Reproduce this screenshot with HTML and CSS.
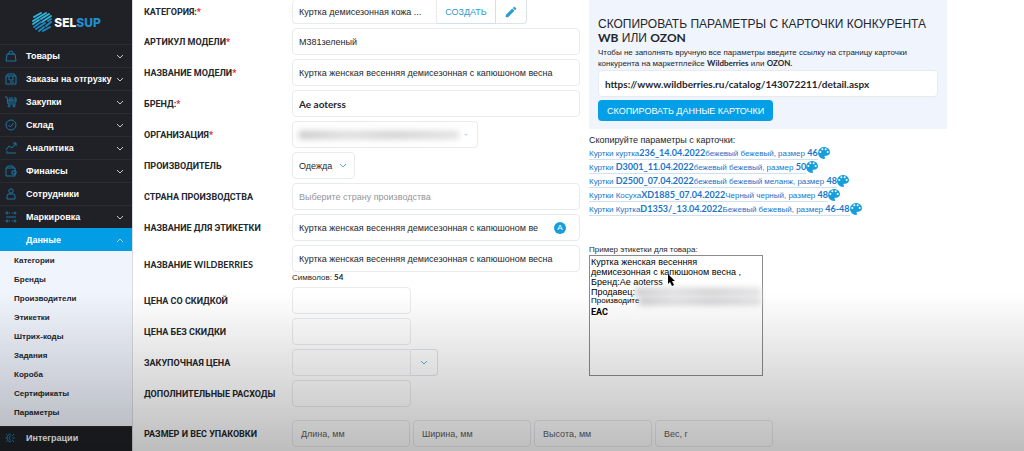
FILE: index.html
```html
<!DOCTYPE html>
<html lang="ru">
<head>
    <meta charset="UTF-8">
    <meta name="viewport" content="width=device-width, initial-scale=1.0">
    <title>SelSup</title>
    <link rel="stylesheet" href="styles.css">
</head>
<body>
    <!-- Shared icons -->
    <svg class="sprite" width="0" height="0">
        <symbol id="chevron" viewBox="0 0 8 5"><path d="M1 1l3 3 3-3" fill="none" stroke="currentColor"/></symbol>
        <symbol id="palette" viewBox="3 3 18 18"><path fill="currentColor" d="M12 3a9 9 0 0 0 0 18c.83 0 1.5-.67 1.5-1.5 0-.39-.15-.74-.39-1.01-.23-.26-.38-.61-.38-.99 0-.83.67-1.5 1.5-1.5H16c2.76 0 5-2.24 5-5 0-4.42-4.03-8-9-8zm-5.5 9a1.5 1.5 0 1 1 0-3 1.500 1.500 0 0 1 0 3zm3-4a1.500 1.500 0 1 1 0-3 1.500 1.500 0 0 1 0 3zm5 0a1.500 1.500 0 1 1 0-3 1.500 1.500 0 0 1 0 3zm3 4a1.500 1.500 0 1 1 0-3 1.500 1.500 0 0 1 0 3z"/></symbol>
    </svg>

    <div class="layout">
        <aside class="sidebar">
            <a class="logo" href="#">
                <svg width="22" height="22" viewBox="0 0 22 22" fill="none" stroke-linecap="round">
                    <g stroke="#2fb4dc" stroke-width="2">
                        <path d="M3 6l7-4M2 10l13-8M2 13l6-4M10 8l8-5M11 11l9-6"/>
                    </g>
                    <g stroke="#1b86bd" stroke-width="2">
                        <path d="M3 16l7-5M5 18l9-6M17 10l3-2M8 20l5-4M15 15l5-4M12 20l7-4"/>
                    </g>
                </svg>
                <span>SEL<b>SUP</b></span>
            </a>
            <nav>
                <a class="nav-item" href="#">
                    <svg class="nav-icon" viewBox="0 0 12 12"><path d="M2 4h8l1 7H1zM4 5V3a2 2 0 0 1 4 0v2"/></svg>
                    <span>Товары</span><svg class="arrow"><use href="#chevron"/></svg>
                </a>
                <a class="nav-item" href="#">
                    <svg class="nav-icon" viewBox="0 0 12 12"><path d="M1 3h10v8H1zM1 3l2-2h6l2 2M4 3v4h4V3M5 9h4"/></svg>
                    <span>Заказы на отгрузку</span><svg class="arrow"><use href="#chevron"/></svg>
                </a>
                <a class="nav-item" href="#">
                    <svg class="nav-icon" viewBox="0 0 12 12"><path d="M0 1h2l1 7h8M3 6h8V2H9M5 1v4M7 1v4M3 4h8"/><circle cx="4" cy="10" r="1"/><circle cx="9" cy="10" r="1"/></svg>
                    <span>Закупки</span><svg class="arrow"><use href="#chevron"/></svg>
                </a>
                <a class="nav-item" href="#">
                    <svg class="nav-icon" viewBox="0 0 12 12"><circle cx="6" cy="6" r="5"/><path d="M3.500 6l2 2 3-4"/></svg>
                    <span>Склад</span><svg class="arrow"><use href="#chevron"/></svg>
                </a>
                <a class="nav-item" href="#">
                    <svg class="nav-icon" viewBox="0 0 12 12"><path d="M1 8l3-4 3 2 4-5M8 1h3v3M1 11h10M2 9v1"/></svg>
                    <span>Аналитика</span><svg class="arrow"><use href="#chevron"/></svg>
                </a>
                <a class="nav-item" href="#">
                    <svg class="nav-icon" viewBox="0 0 12 12"><path d="M1 3h9v8H1zM1 3l2-2h5v2M7 6h4v3H7z"/></svg>
                    <span>Финансы</span><svg class="arrow"><use href="#chevron"/></svg>
                </a>
                <a class="nav-item" href="#">
                    <svg class="nav-icon" viewBox="0 0 12 12"><circle cx="6" cy="3" r="2.200"/><path d="M2 11V8q0-2 2-2h4q2 0 2 2v3z"/></svg>
                    <span>Сотрудники</span>
                </a>
                <a class="nav-item" href="#">
                    <svg class="nav-icon" viewBox="0 0 12 12"><circle cx="2" cy="2" r="1"/><circle cx="10" cy="2" r="1"/><circle cx="2" cy="10" r="1"/><circle cx="10" cy="10" r="1"/><path d="M1 6h10M4 2h1M7 2h1M4 10h1M7 10h1"/></svg>
                    <span>Маркировка</span><svg class="arrow"><use href="#chevron"/></svg>
                </a>
                <a class="nav-item active" href="#">
                    <span class="nav-icon"></span>
                    <span>Данные</span><svg class="arrow up"><use href="#chevron"/></svg>
                </a>
                <div class="submenu">
                    <a href="#">Категории</a>
                    <a href="#">Бренды</a>
                    <a href="#">Производители</a>
                    <a href="#">Этикетки</a>
                    <a href="#">Штрих-коды</a>
                    <a href="#">Задания</a>
                    <a href="#">Короба</a>
                    <a href="#">Сертификаты</a>
                    <a href="#">Параметры</a>
                </div>
                <a class="nav-item" href="#">
                    <svg class="nav-icon" viewBox="0 0 12 12"><path d="M6 2a4 4 0 0 0 0 8M6 4a2 2 0 0 0 0 4M7 6h3M7 4l2-2M7 8l2 2M0 6h2M1 2l1 1M1 10l1-1"/></svg>
                    <span>Интеграции</span>
                </a>
            </nav>
        </aside>

        <main class="content">
            <form class="product-form">
                <div class="row row-first">
                    <label for="category">Категория:<i>*</i></label>
                    <div class="group">
                        <select id="category" class="field category"><option>Куртка демисезонная кожа ...</option></select>
                        <button type="button" class="btn-side create">Создать</button>
                        <button type="button" class="btn-side edit" aria-label="Редактировать">
                            <svg width="14" height="14" viewBox="0 0 24 24" fill="currentColor"><path d="M3 17.250V21h3.750L17.800 9.900l-3.700-3.700zM20.700 7a1 1 0 0 0 0-1.400l-2.300-2.300a1 1 0 0 0-1.400 0l-1.800 1.800 3.700 3.700z"/></svg>
                        </button>
                    </div>
                </div>
                <div class="row">
                    <label for="article">Артикул модели<i>*</i></label>
                    <input id="article" class="field" type="text" value="М381зеленый">
                </div>
                <div class="row">
                    <label for="model">Название модели<i>*</i></label>
                    <input id="model" class="field" type="text" value="Куртка женская весенняя демисезонная с капюшоном весна">
                </div>
                <div class="row">
                    <label for="brand">Бренд:<i>*</i></label>
                    <input id="brand" class="field latin" type="text" value="Ae aoterss">
                </div>
                <div class="row">
                    <label for="org">Организация<i>*</i></label>
                    <button type="button" id="org" class="field org"><span class="smear"></span><svg class="mini-arrow"><use href="#chevron"/></svg></button>
                </div>
                <div class="row">
                    <label for="maker">Производитель</label>
                    <div class="select-wrap">
                        <select id="maker" class="field"><option>Одежда</option></select>
                        <svg class="arrow"><use href="#chevron"/></svg>
                    </div>
                </div>
                <div class="row">
                    <label for="country">Страна производства</label>
                    <input id="country" class="field" type="text" placeholder="Выберите страну производства">
                </div>
                <div class="row">
                    <label for="label-name">Название для этикетки</label>
                    <div class="field with-badge">
                        <input id="label-name" type="text" value="Куртка женская весенняя демисезонная с капюшоном весна">
                        <button type="button" class="auto-btn">A</button>
                    </div>
                </div>
                <div class="row">
                    <label for="wb-name">Название <span class="latin">Wildberries</span></label>
                    <div>
                        <input id="wb-name" class="field" type="text" value="Куртка женская весенняя демисезонная с капюшоном весна">
                        <div class="hint">Символов: <span class="latin">54</span></div>
                    </div>
                </div>
                <div class="row">
                    <label for="price-sale">Цена со скидкой</label>
                    <input id="price-sale" class="field short" type="text">
                </div>
                <div class="row">
                    <label for="price">Цена без скидки</label>
                    <input id="price" class="field short" type="text">
                </div>
                <div class="row">
                    <label for="price-buy">Закупочная цена</label>
                    <div class="group">
                        <input id="price-buy" class="field short" type="text">
                        <button type="button" class="btn-side drop" aria-label="Выбрать"><svg class="arrow"><use href="#chevron"/></svg></button>
                    </div>
                </div>
                <div class="row">
                    <label for="costs">Дополнительные расходы</label>
                    <input id="costs" class="field short" type="text">
                </div>
            </form>

            <section class="side">
                <div class="copy-card">
                    <h2>Скопировать параметры с карточки конкурента <span class="latin">WB</span> или <span class="latin">OZON</span></h2>
                    <label for="url">Чтобы не заполнять вручную все параметры введите ссылку на страницу карточки<br>конкурента на маркетплейсе <span class="latin">Wildberries</span> или <span class="latin">OZON.</span></label>
                    <input id="url" class="field latin" type="text" value="https://www.wildberries.ru/catalog/143072211/detail.aspx">
                    <button type="button" class="copy-btn">Скопировать данные карточки</button>
                </div>

                <div class="similar">
                    <p>Скопируйте параметры с карточки:</p>
                    <ul>
                        <li><a href="#">Куртки куртка<span class="latin">236_14.04.2022</span>бежевый бежевый, размер <span class="latin">46</span></a><svg><use href="#palette"/></svg></li>
                        <li><a href="#">Куртки <span class="latin">D3001_11.04.2022</span>бежевый бежевый, размер <span class="latin">50</span></a><svg><use href="#palette"/></svg></li>
                        <li><a href="#">Куртки <span class="latin">D2500_07.04.2022</span>бежевый бежевый меланж, размер <span class="latin">48</span></a><svg><use href="#palette"/></svg></li>
                        <li><a href="#">Куртки Косуха<span class="latin">XD1885_07.04.2022</span>Черный черный, размер <span class="latin">48</span></a><svg><use href="#palette"/></svg></li>
                        <li><a href="#">Куртки Куртка<span class="latin">D1353/_13.04.2022</span>Бежевый бежевый, размер <span class="latin">46-48</span></a><svg><use href="#palette"/></svg></li>
                    </ul>
                </div>

                <div class="preview">
                    <p>Пример этикетки для товара:</p>
                    <div class="tag">
                        <div>Куртка женская весенняя<br>демисезонная с капюшоном весна ,</div>
                        <div>Бренд:Ae aoterss</div>
                        <div class="hidden-line">Продавец:<span class="smear"></span></div>
                        <div class="hidden-line small">Производите<span class="smear"></span></div>
                        <div class="eac">EAC</div>
                        <svg class="cursor" viewBox="0 0 8 12"><path d="M1 0v10l2-2 2 4 2-1-2-4h3z"/></svg>
                    </div>
                </div>
            </section>

            <div class="row sizes">
                <label for="length">Размер и вес упаковки</label>
                <div class="size-fields">
                    <input id="length" class="field" type="text" placeholder="Длина, мм" aria-label="Длина, мм">
                    <input class="field" type="text" placeholder="Ширина, мм" aria-label="Ширина, мм">
                    <input class="field" type="text" placeholder="Высота, мм" aria-label="Высота, мм">
                    <input class="field" type="text" placeholder="Вес, г" aria-label="Вес, г">
                </div>
            </div>
        </main>
    </div>
</body>
</html>
```

FILE: styles.css
```css
* {
    margin: 0;
    padding: 0;
    box-sizing: border-box;
}

body {
    font-family: "Liberation Sans", Arial, sans-serif;
    font-size: 9px;
    color: #24272c;
    background: #fff;
    height: 100vh;
    overflow: hidden;
}

/* Shade at the bottom of the window */
body::after {
    content: '';
    position: fixed;
    inset: 65% 0 0 0;
    background: linear-gradient(rgba(0, 0, 0, 0), rgba(0, 0, 0, 0.26));
    pointer-events: none;
}

input, button, select {
    font: inherit;
    color: inherit;
}

button {
    cursor: pointer;
}

.sprite {
    position: absolute;
}

.latin {
    font-family: Lato, sans-serif;
    font-weight: bold;
}

.layout {
    display: flex;
    min-height: 100vh;
}

/* Sidebar */
.sidebar {
    width: 133px;
    flex-shrink: 0;
    background: #1f2126;
    border-right: 1px solid #d9dbdd;
}

.logo {
    display: flex;
    align-items: center;
    justify-content: center;
    gap: 1px;
    height: 44px;
    color: #fff;
    font-family: Inter, sans-serif;
    font-size: 12px;
    font-weight: 800;
    text-decoration: none;
}

.logo b {
    color: #1e8fd0;
    font-weight: 800;
}

.nav-item {
    display: flex;
    align-items: center;
    height: 23px;
    padding: 0 8px 0 5px;
    border-top: 1px solid #292c31;
    color: #fff;
    font-weight: bold;
    text-decoration: none;
}

.nav-icon {
    width: 12px;
    height: 12px;
    margin-right: 9px;
    fill: none;
    stroke: #1d75a3;
    flex-shrink: 0;
}

.arrow {
    width: 8px;
    height: 5px;
}

.nav-item .arrow {
    margin-left: auto;
    color: #c5c8cc;
}

.arrow.up {
    transform: rotate(180deg);
}

.nav-item.active {
    background: #029de4;
    border-color: #029de4;
}

.submenu {
    padding-bottom: 4px;
    background: #f0f4fd;
}

.submenu a {
    display: block;
    padding-left: 14px;
    line-height: 19px;
    font-size: 8px;
    font-weight: bold;
    color: #24272c;
    text-decoration: none;
}

/* Content */
.content {
    flex: 1;
    display: grid;
    grid-template-columns: 436fr 358fr;
    column-gap: 9px;
    align-content: start;
    padding: 0 77px 0 11px;
}

.product-form {
    display: flex;
    flex-direction: column;
    gap: 4px;
}

.row {
    display: grid;
    grid-template-columns: 148px 1fr;
    align-items: center;
    justify-items: start;
}

.row > * {
    min-width: 0;
}

.row > div {
    width: 100%;
}

.row > label {
    font-family: Roboto, sans-serif;
    font-weight: bold;
    text-transform: uppercase;
}

.row > label i {
    color: #e2232b;
    font-style: normal;
}

.field {
    width: 100%;
    height: 27px;
    padding: 0 6px;
    border: 1px solid #e8ebee;
    border-radius: 4px;
    background: transparent;
    outline: none;
    appearance: none;
}

.field::placeholder {
    color: #92969b;
}

.field.latin {
    font-size: 10px;
}

.group {
    display: flex;
}

.group .field {
    border-radius: 4px 0 0 4px;
}

.row-first .field,
.row-first .btn-side {
    height: 24px;
    border-top: 0;
}

.group .category {
    width: 145px;
}

.btn-side {
    display: flex;
    align-items: center;
    justify-content: center;
    height: 27px;
    border: 1px solid #dce5ea;
    border-left: 0;
    background: transparent;
    color: #2a9bd0;
}

.create {
    width: 59px;
    border-color: #c9e4f0;
    text-transform: uppercase;
}

.edit {
    width: 31px;
    border-radius: 0 0 4px 0;
}

.drop {
    width: 27px;
    border-radius: 0 4px 4px 0;
}

.short {
    width: 119px;
}

.org {
    display: flex;
    align-items: center;
    justify-content: space-between;
    width: 186px;
    padding-right: 9px;
}

.smear {
    display: block;
    flex: 1;
    height: 8px;
    background: linear-gradient(90deg, #c6c6c8, #dcdcde 30%, #cfcfd1 60%, #e0e0e2);
    filter: blur(3px);
}

.org .smear {
    flex: 0 1 160px;
}

.mini-arrow {
    width: 4px;
    height: 3px;
    color: #2a9bd0;
}

.row > .select-wrap {
    position: relative;
    width: 63px;
}

.select-wrap .arrow {
    position: absolute;
    right: 8px;
    top: 11px;
    color: #55b2dc;
    pointer-events: none;
}

.drop .arrow {
    color: #55b2dc;
}

.with-badge {
    display: flex;
    align-items: center;
    padding-right: 13px;
    gap: 16px;
}

.with-badge input {
    flex: 1;
    min-width: 0;
    border: 0;
    outline: none;
    background: transparent;
}

.auto-btn {
    width: 12px;
    height: 12px;
    border: 0;
    border-radius: 50%;
    background: #169edb;
    color: #fff;
    font-size: 8px;
    line-height: 12px;
}

.hint {
    height: 11px;
    line-height: 11px;
    font-size: 8px;
}

.sizes {
    grid-column: 1 / -1;
    margin-top: 13px;
}

.size-fields {
    display: flex;
    gap: 3px;
}

.size-fields .field {
    flex: 0 1 118px;
    min-width: 0;
    padding-left: 8px;
}

.size-fields .field::placeholder {
    color: #5b5e63;
}

/* Right column */
.copy-card {
    padding: 17px 9px 8px;
    background: #f0f4fc;
}

.copy-card h2 {
    font-size: 12px;
    font-weight: normal;
    line-height: 14px;
    text-transform: uppercase;
}

.copy-card label {
    display: block;
    margin: 2px 0 1px;
    font-size: 8px;
    line-height: 11px;
}

.copy-card .field {
    background: #fff;
}

.copy-btn {
    display: block;
    height: 21px;
    margin-top: 3px;
    padding: 0 9px;
    border: 0;
    border-radius: 4px;
    background: #049fe6;
    color: #fff;
    text-transform: uppercase;
}

.similar {
    margin-top: 6px;
}

.similar p {
    line-height: 11px;
}

.similar ul {
    list-style: none;
}

.similar li {
    display: flex;
    align-items: center;
    height: 14px;
    font-size: 8px;
    line-height: 11px;
    white-space: nowrap;
}

.similar .latin {
    font-size: 9px;
}

.similar a {
    color: #1a74c9;
    text-decoration: none;
    border-bottom: 1px solid #cfe0f0;
}

.similar svg {
    width: 12px;
    height: 12px;
    color: #169edb;
}

.preview {
    margin-top: 29px;
}

.preview p {
    font-size: 8px;
    line-height: 10px;
}

.tag {
    position: relative;
    width: 174px;
    height: 121px;
    padding: 1px;
    border: 1px solid #8b8b8b;
    color: #000;
    line-height: 10px;
}

.hidden-line {
    display: flex;
    align-items: center;
}

.small {
    font-size: 8px;
    line-height: 8px;
}

.eac {
    font-family: Roboto, sans-serif;
    font-weight: bold;
    line-height: 14px;
}

.cursor {
    position: absolute;
    left: 77px;
    top: 18px;
    width: 8px;
    height: 12px;
}
```
